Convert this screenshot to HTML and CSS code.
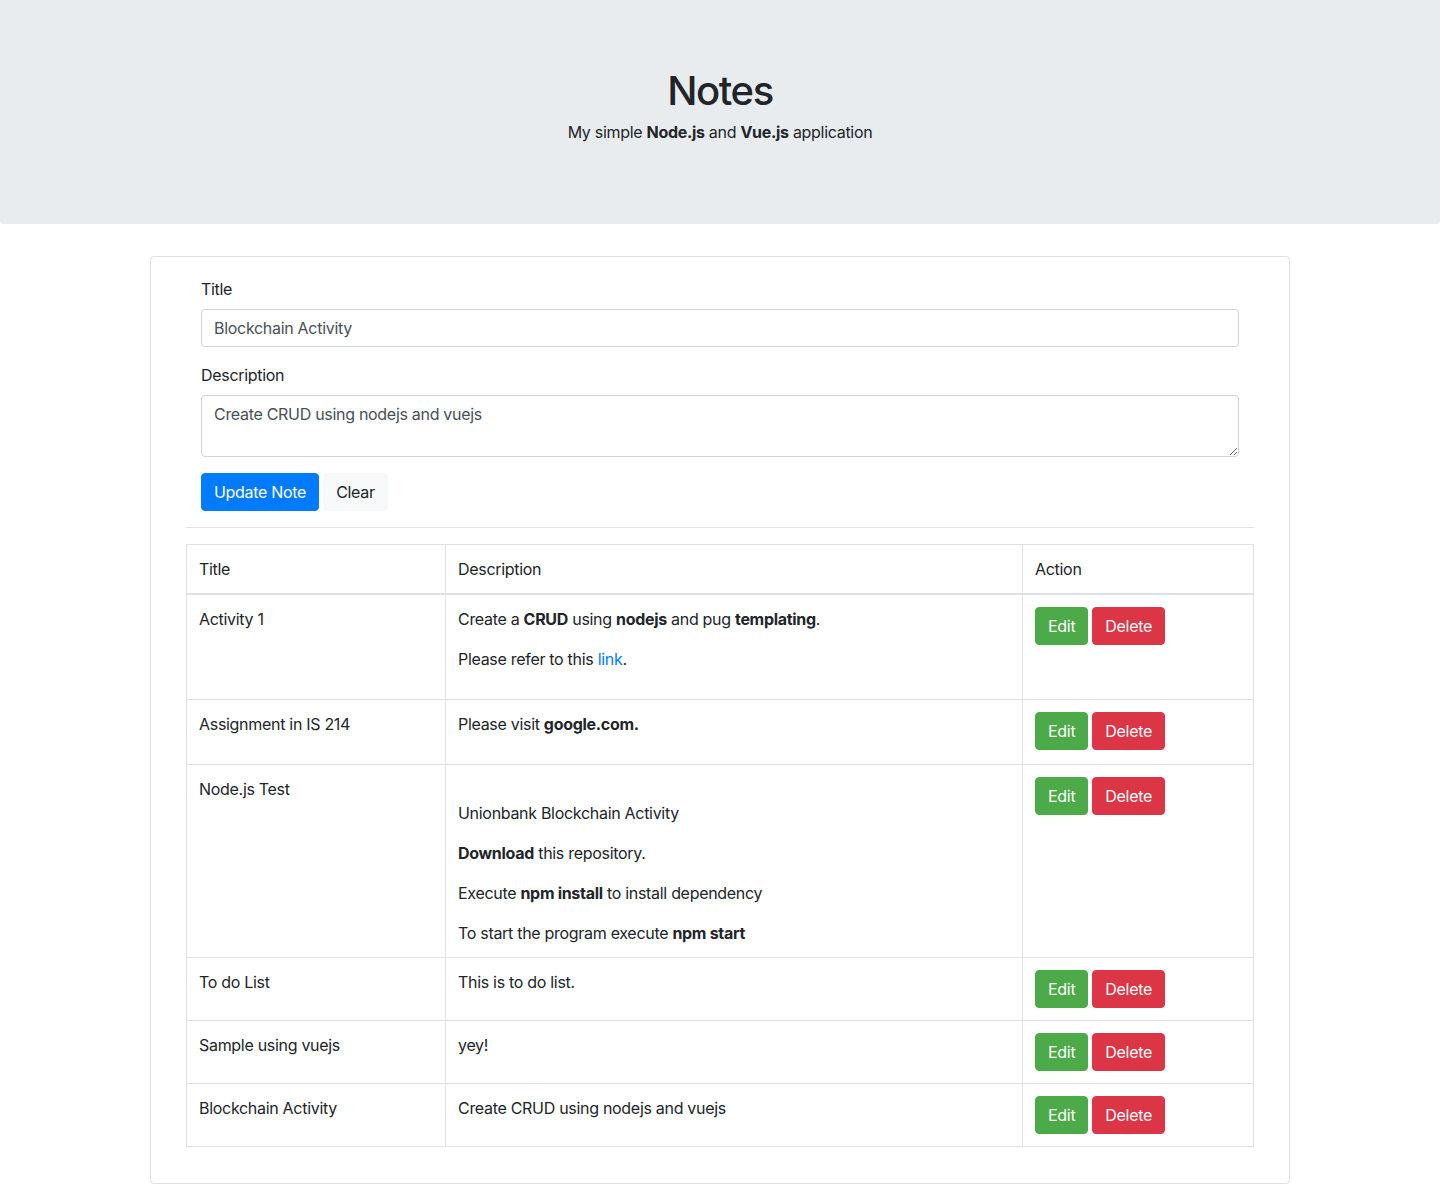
FILE: index.html
```html
<!DOCTYPE html>
<html lang="en">
<head>
<meta charset="utf-8">
<title>Notes</title>
<link rel="stylesheet" href="styles.css">
</head>
<body>
<header class="jumbotron">
  <h1 class="jumbo-title">Notes</h1>
  <p class="jumbo-lead">My simple <b>Node.js</b> and <b>Vue.js</b> application</p>
</header>
<main class="card">
  <div class="card-body">
    <form class="note-form">
      <div class="form-group">
        <label class="form-label">Title</label>
        <input class="form-control" type="text" value="Blockchain Activity">
      </div>
      <div class="form-group">
        <label class="form-label">Description</label>
        <textarea class="form-control textarea" rows="2">Create CRUD using nodejs and vuejs</textarea>
      </div>
      <div class="btn-row">
        <button type="button" class="btn btn-primary">Update Note</button>
        <button type="button" class="btn btn-light">Clear</button>
      </div>
    </form>
    <hr class="divider">
    <table class="notes-table">
      <colgroup>
        <col class="col-title">
        <col class="col-desc">
        <col class="col-action">
      </colgroup>
      <thead>
        <tr><th>Title</th><th>Description</th><th>Action</th></tr>
      </thead>
      <tbody>
        <tr>
          <td>Activity 1</td>
          <td>
            <p class="para">Create a <b>CRUD</b> using <b>nodejs</b> and pug <b>templating</b>.</p>
            <p class="para">Please refer to this <a class="link" href="#">link</a>.</p>
          </td>
          <td><div class="actions"><button class="btn btn-success">Edit</button><button class="btn btn-danger">Delete</button></div></td>
        </tr>
        <tr>
          <td>Assignment in IS 214</td>
          <td><p class="para">Please visit <b>google.com.</b></p></td>
          <td><div class="actions"><button class="btn btn-success">Edit</button><button class="btn btn-danger">Delete</button></div></td>
        </tr>
        <tr>
          <td>Node.js Test</td>
          <td>
            <div class="blank-line"></div>
            <p class="para">Unionbank Blockchain Activity</p>
            <p class="para"><b>Download</b> this repository.</p>
            <p class="para">Execute <b>npm install</b> to install dependency</p>
            <p class="para last">To start the program execute <b>npm start</b></p>
          </td>
          <td><div class="actions"><button class="btn btn-success">Edit</button><button class="btn btn-danger">Delete</button></div></td>
        </tr>
        <tr>
          <td>To do List</td>
          <td>This is to do list.</td>
          <td><div class="actions"><button class="btn btn-success">Edit</button><button class="btn btn-danger">Delete</button></div></td>
        </tr>
        <tr>
          <td>Sample using vuejs</td>
          <td>yey!</td>
          <td><div class="actions"><button class="btn btn-success">Edit</button><button class="btn btn-danger">Delete</button></div></td>
        </tr>
        <tr>
          <td>Blockchain Activity</td>
          <td>Create CRUD using nodejs and vuejs</td>
          <td><div class="actions"><button class="btn btn-success">Edit</button><button class="btn btn-danger">Delete</button></div></td>
        </tr>
      </tbody>
    </table>
  </div>
</main>
</body>
</html>
```
FILE: styles.css
```css
* { box-sizing: border-box; }
html, body { margin: 0; padding: 0; }
body {
  font-family: Inter, "Liberation Sans", sans-serif;
  font-size: 16px;
  line-height: 1.5;
  letter-spacing: -0.3px;
  color: #212529;
  background: #fff;
  height: 1184px;
}
b { font-weight: 700; }

.jumbotron {
  background: #e9ecef;
  padding: 64px 32px;
  margin-bottom: 32px;
  text-align: center;
  border-radius: 0 0 4px 4px;
}
.jumbo-title {
  font-size: 40px;
  font-weight: 500;
  line-height: 1.2;
  letter-spacing: -1.4px;
  margin: 0 0 8px;
  padding-top: 3px;
  height: 48px;
}
.jumbo-lead { margin: 0 0 16px; }

.card {
  display: block;
  width: 1140px;
  margin: 0 auto;
  border: 1px solid rgba(0,0,0,.125);
  border-radius: 4px;
}
.card-body { padding: 20px 35px; }

.note-form { padding: 0 15px; }
.form-group { margin-bottom: 16px; display: flex; flex-direction: column; }
.form-label { margin-bottom: 8px; display: block; }
.form-control {
  display: block;
  width: 100%;
  height: 38px;
  padding: 6px 12px;
  font-family: inherit;
  font-size: 16px;
  line-height: 1.5;
  letter-spacing: -0.3px;
  color: #495057;
  background: #fff;
  border: 1px solid #ced4da;
  border-radius: 4px;
  margin: 0;
}
.textarea { height: 62px; resize: vertical; }

.btn-row { display: flex; gap: 4px; }
.btn {
  font-family: inherit;
  font-size: 16px;
  line-height: 1.5;
  letter-spacing: -0.3px;
  padding: 6px 12px;
  border: 1px solid transparent;
  border-radius: 4px;
  cursor: pointer;
  margin: 0;
}
.btn-primary { background: #007bff; border-color: #007bff; color: #fff; }
.btn-light { background: #f8f9fa; border-color: #f8f9fa; color: #212529; }
.btn-success { background: #4caa48; border-color: #4caa48; color: #fff; }
.btn-danger { background: #dc3545; border-color: #dc3545; color: #fff; }

.divider {
  border: 0;
  border-top: 1px solid rgba(0,0,0,.1);
  margin: 16px 0;
}

.notes-table {
  width: 100%;
  border-collapse: collapse;
  table-layout: fixed;
  margin-bottom: 16px;
}
.col-title { width: 259px; }
.col-desc { width: 577px; }
.col-action { width: 231px; }
.notes-table th, .notes-table td {
  padding: 12px;
  border: 1px solid #dee2e6;
  vertical-align: top;
  text-align: left;
}
.notes-table th { font-weight: 400; border-bottom: 2px solid #dee2e6; }
.para { margin: 0 0 16px; }
.para.last { margin-bottom: 0; }
.blank-line { height: 24px; }
.link { color: #007bff; text-decoration: none; }
.actions { display: flex; gap: 4px; }
```
